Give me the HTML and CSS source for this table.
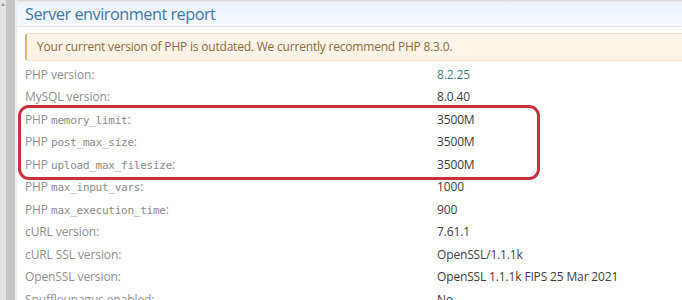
FILE: index.html
```html
<!DOCTYPE html>
<html lang="en">
<head>
<meta charset="utf-8">
<title>Server environment report</title>
<link rel="stylesheet" href="styles.css">
</head>
<body>
<div class="frame">
  <div class="gutter"><span class="arrow"></span></div>
  <div class="rail"></div>
  <main class="panel">
    <header class="head"><h1 class="title">Server environment report</h1></header>
    <div class="alert">Your current version of PHP is outdated. We currently recommend PHP 8.3.0.</div>
    <dl class="report">
      <div class="row"><dt>PHP version:</dt><dd class="link">8.2.25</dd></div>
      <div class="row"><dt>MySQL version:</dt><dd>8.0.40</dd></div>
      <div class="row"><dt>PHP <code>memory_limit</code>:</dt><dd>3500M</dd></div>
      <div class="row"><dt>PHP <code>post_max_size</code>:</dt><dd>3500M</dd></div>
      <div class="row"><dt>PHP <code>upload_max_filesize</code>:</dt><dd>3500M</dd></div>
      <div class="row"><dt>PHP <code>max_input_vars</code>:</dt><dd>1000</dd></div>
      <div class="row"><dt>PHP <code>max_execution_time</code>:</dt><dd>900</dd></div>
      <div class="row"><dt>cURL version:</dt><dd>7.61.1</dd></div>
      <div class="row"><dt>cURL SSL version:</dt><dd>OpenSSL/1.1.1k</dd></div>
      <div class="row"><dt>OpenSSL version:</dt><dd>OpenSSL 1.1.1k FIPS 25 Mar 2021</dd></div>
      <div class="row"><dt>Snuffleupagus enabled:</dt><dd>No</dd></div>
    </dl>
    <div class="mark"></div>
  </main>
</div>
</body>
</html>
```

FILE: styles.css
```css
html, body {
  margin: 0;
  padding: 0;
  background: #ffffff;
  overflow: hidden;
}
body {
  font-family: "Open Sans", "Noto Sans", sans-serif;
  width: 682px;
  height: 300px;
}
.frame {
  display: flex;
  height: 300px;
}
.gutter {
  width: 6px;
  flex: none;
  background: #e4e4e4;
  position: relative;
}
.arrow {
  position: absolute;
  left: 1px;
  top: 3px;
  width: 0;
  height: 0;
  border-left: 2px solid transparent;
  border-right: 2px solid transparent;
  border-bottom: 3px solid #9a9a9a;
}
.rail {
  width: 9px;
  flex: none;
  background: #c6c6c6;
  border-right: 2px solid #ececec;
}
.panel {
  flex: 1;
  position: relative;
  padding-top: 3px;
  background: linear-gradient(#d6d6d6, #ffffff 4px);
}
.head {
  height: 23px;
  border-bottom: 1px solid #dfe4ea;
  background: linear-gradient(#eaf2fc, #f5f9fe);
  padding-left: 8px;
}
.title {
  margin: 0;
  font-weight: normal;
  font-size: 16.3px;
  line-height: 22px;
  color: #3f79a8;
  letter-spacing: -0.5px;
}
.alert {
  margin: 6px 0 0 8px;
  height: 26px;
  line-height: 26px;
  padding-left: 10px;
  background: #fef3e7;
  border: 1px solid #f3e2cd;
  border-left: 2px solid #dfb57f;
  border-right: none;
  border-radius: 3px 0 0 3px;
  color: #8a6b3c;
  font-size: 12px;
  letter-spacing: -0.2px;
}
.report {
  margin: 1.75px 0 0 8px;
}
.row {
  display: flex;
  height: 22.55px;
  align-items: center;
  font-size: 12px;
}
.row dt {
  width: 412px;
  flex: none;
  color: #8f8f8f;
  letter-spacing: -0.1px;
}
.row dd {
  margin: 0;
  color: #3c3c3c;
  letter-spacing: -0.15px;
}
.row dd.link {
  color: #3f7d86;
}
.row code {
  font-family: "DejaVu Sans Mono", "Liberation Mono", monospace;
  font-size: 11px;
  color: #8a8a8a;
  letter-spacing: -0.25px;
}
.mark {
  position: absolute;
  left: 1px;
  top: 105px;
  width: 516px;
  height: 69px;
  border: 3px solid #c8313b;
  border-radius: 11px;
}
```
